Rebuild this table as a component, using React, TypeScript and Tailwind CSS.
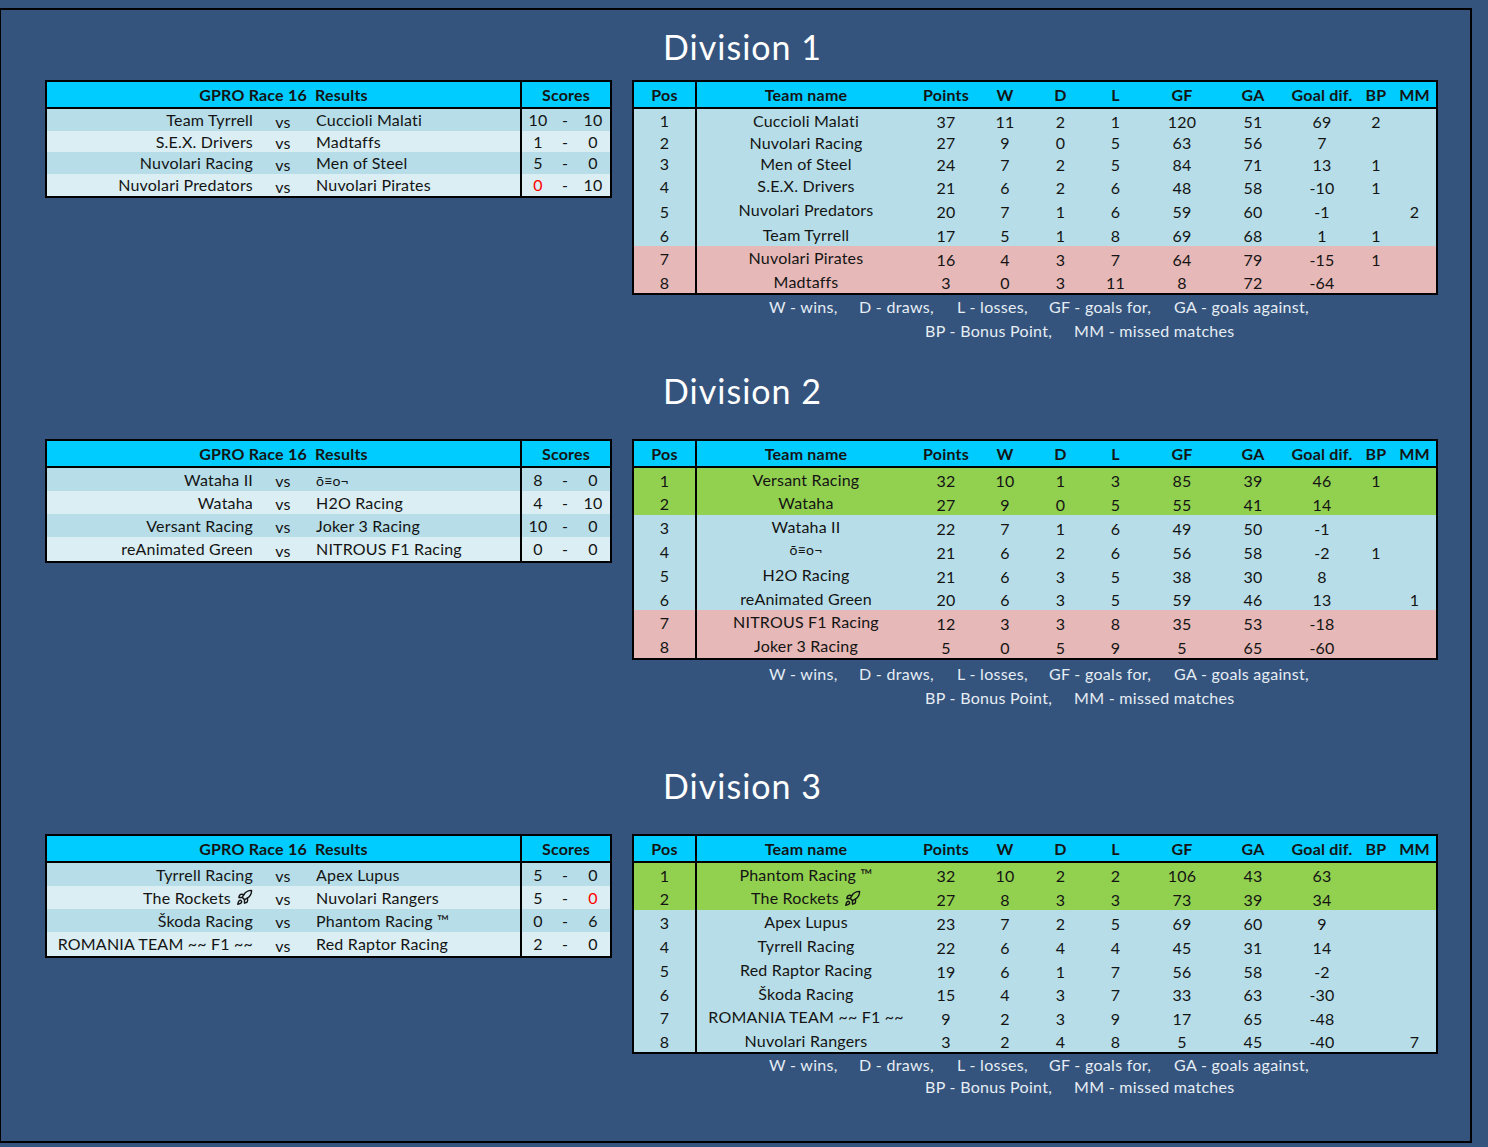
import React from 'react';
import { Rocket } from 'lucide-react';

type Match = { home: string; away: string; hs: string; as: string; redHome?: boolean; redAway?: boolean };
type Standing = { pos: number; team: string; pts: string; w: string; d: string; l: string; gf: string; ga: string; dif: string; bp?: string; mm?: string; tone: 'blue' | 'pink' | 'green' };

const toneBg = {
  blue: 'bg-[#b7dee8]',
  pink: 'bg-[#e6b8b7]',
  green: 'bg-[#92d050]',
};

const divisions = [
  {
    title: 'Division 1',
    titleMt: 'mt-0',
    titleBox: 'h-[70px] pt-[4px] leading-[66px]',
    tableMt: 'mt-0',
    resultRows: [22, 21, 22, 22],
    standRows: [22, 21, 22, 24, 25, 23, 24, 23],
    legend: 'mt-0 leading-[24px]',
    matches: [
      { home: 'Team Tyrrell', away: 'Cuccioli Malati', hs: '10', as: '10' },
      { home: 'S.E.X. Drivers', away: 'Madtaffs', hs: '1', as: '0' },
      { home: 'Nuvolari Racing', away: 'Men of Steel', hs: '5', as: '0' },
      { home: 'Nuvolari Predators', away: 'Nuvolari Pirates', hs: '0', as: '10', redHome: true },
    ] as Match[],
    table: [
      { pos: 1, team: 'Cuccioli Malati', pts: '37', w: '11', d: '2', l: '1', gf: '120', ga: '51', dif: '69', bp: '2', tone: 'blue' },
      { pos: 2, team: 'Nuvolari Racing', pts: '27', w: '9', d: '0', l: '5', gf: '63', ga: '56', dif: '7', tone: 'blue' },
      { pos: 3, team: 'Men of Steel', pts: '24', w: '7', d: '2', l: '5', gf: '84', ga: '71', dif: '13', bp: '1', tone: 'blue' },
      { pos: 4, team: 'S.E.X. Drivers', pts: '21', w: '6', d: '2', l: '6', gf: '48', ga: '58', dif: '-10', bp: '1', tone: 'blue' },
      { pos: 5, team: 'Nuvolari Predators', pts: '20', w: '7', d: '1', l: '6', gf: '59', ga: '60', dif: '-1', mm: '2', tone: 'blue' },
      { pos: 6, team: 'Team Tyrrell', pts: '17', w: '5', d: '1', l: '8', gf: '69', ga: '68', dif: '1', bp: '1', tone: 'blue' },
      { pos: 7, team: 'Nuvolari Pirates', pts: '16', w: '4', d: '3', l: '7', gf: '64', ga: '79', dif: '-15', bp: '1', tone: 'pink' },
      { pos: 8, team: 'Madtaffs', pts: '3', w: '0', d: '3', l: '11', gf: '8', ga: '72', dif: '-64', tone: 'pink' },
    ] as Standing[],
  },
  {
    title: 'Division 2',
    titleMt: 'mt-[15px]',
    titleBox: 'h-[66px] leading-[66px]',
    tableMt: 'mt-[15px]',
    resultRows: [23, 23, 23, 24],
    standRows: [23, 24, 24, 24, 24, 23, 24, 24],
    legend: 'mt-[2px] leading-[24px]',
    matches: [
      { home: 'Wataha II', away: 'ō≡o¬', hs: '8', as: '0' },
      { home: 'Wataha', away: 'H2O Racing', hs: '4', as: '10' },
      { home: 'Versant Racing', away: 'Joker 3 Racing', hs: '10', as: '0' },
      { home: 'reAnimated Green', away: 'NITROUS F1 Racing', hs: '0', as: '0' },
    ] as Match[],
    table: [
      { pos: 1, team: 'Versant Racing', pts: '32', w: '10', d: '1', l: '3', gf: '85', ga: '39', dif: '46', bp: '1', tone: 'green' },
      { pos: 2, team: 'Wataha', pts: '27', w: '9', d: '0', l: '5', gf: '55', ga: '41', dif: '14', tone: 'green' },
      { pos: 3, team: 'Wataha II', pts: '22', w: '7', d: '1', l: '6', gf: '49', ga: '50', dif: '-1', tone: 'blue' },
      { pos: 4, team: 'ō≡o¬', pts: '21', w: '6', d: '2', l: '6', gf: '56', ga: '58', dif: '-2', bp: '1', tone: 'blue' },
      { pos: 5, team: 'H2O Racing', pts: '21', w: '6', d: '3', l: '5', gf: '38', ga: '30', dif: '8', tone: 'blue' },
      { pos: 6, team: 'reAnimated Green', pts: '20', w: '6', d: '3', l: '5', gf: '59', ga: '46', dif: '13', mm: '1', tone: 'blue' },
      { pos: 7, team: 'NITROUS F1 Racing', pts: '12', w: '3', d: '3', l: '8', gf: '35', ga: '53', dif: '-18', tone: 'pink' },
      { pos: 8, team: 'Joker 3 Racing', pts: '5', w: '0', d: '5', l: '9', gf: '5', ga: '65', dif: '-60', tone: 'pink' },
    ] as Standing[],
  },
  {
    title: 'Division 3',
    titleMt: 'mt-[43px]',
    titleBox: 'h-[66px] leading-[66px]',
    tableMt: 'mt-[15px]',
    resultRows: [23, 23, 23, 24],
    standRows: [23, 24, 24, 24, 24, 23, 24, 23],
    legend: 'mt-0 leading-[22px]',
    matches: [
      { home: 'Tyrrell Racing', away: 'Apex Lupus', hs: '5', as: '0' },
      { home: 'The Rockets', away: 'Nuvolari Rangers', hs: '5', as: '0', redAway: true },
      { home: 'Škoda Racing', away: 'Phantom Racing ™', hs: '0', as: '6' },
      { home: 'ROMANIA TEAM ~~ F1 ~~', away: 'Red Raptor Racing', hs: '2', as: '0' },
    ] as Match[],
    table: [
      { pos: 1, team: 'Phantom Racing ™', pts: '32', w: '10', d: '2', l: '2', gf: '106', ga: '43', dif: '63', tone: 'green' },
      { pos: 2, team: 'The Rockets', pts: '27', w: '8', d: '3', l: '3', gf: '73', ga: '39', dif: '34', tone: 'green' },
      { pos: 3, team: 'Apex Lupus', pts: '23', w: '7', d: '2', l: '5', gf: '69', ga: '60', dif: '9', tone: 'blue' },
      { pos: 4, team: 'Tyrrell Racing', pts: '22', w: '6', d: '4', l: '4', gf: '45', ga: '31', dif: '14', tone: 'blue' },
      { pos: 5, team: 'Red Raptor Racing', pts: '19', w: '6', d: '1', l: '7', gf: '56', ga: '58', dif: '-2', tone: 'blue' },
      { pos: 6, team: 'Škoda Racing', pts: '15', w: '4', d: '3', l: '7', gf: '33', ga: '63', dif: '-30', tone: 'blue' },
      { pos: 7, team: 'ROMANIA TEAM ~~ F1 ~~', pts: '9', w: '2', d: '3', l: '9', gf: '17', ga: '65', dif: '-48', tone: 'blue' },
      { pos: 8, team: 'Nuvolari Rangers', pts: '3', w: '2', d: '4', l: '8', gf: '5', ga: '45', dif: '-40', mm: '7', tone: 'blue' },
    ] as Standing[],
  },
];

// column widths of the standings table, after the Pos column
const cols = [
  { key: 'team', label: 'Team name', w: 'w-[218px]' },
  { key: 'pts', label: 'Points', w: 'w-[62px]' },
  { key: 'w', label: 'W', w: 'w-[56px]' },
  { key: 'd', label: 'D', w: 'w-[55px]' },
  { key: 'l', label: 'L', w: 'w-[55px]' },
  { key: 'gf', label: 'GF', w: 'w-[78px]' },
  { key: 'ga', label: 'GA', w: 'w-[64px]' },
  { key: 'dif', label: 'Goal dif.', w: 'w-[74px]' },
  { key: 'bp', label: 'BP', w: 'w-[34px]' },
  { key: 'mm', label: 'MM', w: 'w-[43px]' },
] as const;

const TeamName: React.FC<{ name: string }> = ({ name }) => {
  if (name === 'ō≡o¬') return <span className="text-[14px]">{name}</span>;
  if (name === 'The Rockets')
    return (
      <span className="inline-flex items-center gap-[5px]">
        {name}
        <Rocket className="w-[17px] h-[17px]" strokeWidth={2} />
      </span>
    );
  return <>{name}</>;
};

const ResultsTable: React.FC<{ matches: Match[]; rows: number[] }> = ({ matches, rows }) => (
  <div className="ml-[44px] w-[567px] border-2 border-black">
    <div className="flex h-[27px] bg-[#00ccff] border-b-2 border-black font-bold text-[16px]">
      <div className="w-[473px] flex items-end justify-center whitespace-pre">GPRO Race 16  Results</div>
      <div className="flex-1 border-l-2 border-black flex items-end justify-center">Scores</div>
    </div>
    {matches.map((m, i) => (
      <div
        key={i}
        className={`flex items-center ${i % 2 === 0 ? 'bg-[#b7dee8]' : 'bg-[#daeef3]'}`}
        style={{ height: rows[i] }}
      >
        <div className="w-[206px] text-right whitespace-nowrap">
          <TeamName name={m.home} />
        </div>
        <div className="w-[60px] text-center pt-[3px]">vs</div>
        <div className="w-[207px] pl-[3px] whitespace-nowrap">
          <TeamName name={m.away} />
        </div>
        <div className="flex-1 h-full flex items-center border-l-2 border-black">
          <span className={`w-[32px] text-center ${m.redHome ? 'text-[#ff0000]' : ''}`}>{m.hs}</span>
          <span className="w-[22px] text-center">-</span>
          <span className={`w-[34px] text-center ${m.redAway ? 'text-[#ff0000]' : ''}`}>{m.as}</span>
        </div>
      </div>
    ))}
  </div>
);

const StandingsTable: React.FC<{ table: Standing[]; rows: number[] }> = ({ table, rows }) => (
  <div className="w-[806px] border-2 border-black">
    <div className="flex h-[27px] bg-[#00ccff] border-b-2 border-black font-bold text-[16px]">
      <div className="w-[63px] border-r-2 border-black flex items-end justify-center">Pos</div>
      {cols.map((c) => (
        <div key={c.key} className={`${c.w} flex items-end justify-center whitespace-nowrap`}>
          {c.label}
        </div>
      ))}
    </div>
    {table.map((r, i) => (
      <div key={r.pos} className={`flex ${toneBg[r.tone]}`} style={{ height: rows[i] }}>
        <div className="w-[63px] border-r-2 border-black flex items-center justify-center pt-[2px]">{r.pos}</div>
        {cols.map((c) => (
          <div
            key={c.key}
            className={`${c.w} flex justify-center whitespace-nowrap ${c.key === 'team' ? 'items-start' : 'items-center pt-[3px]'}`}
          >
            {c.key === 'team' ? <TeamName name={r.team} /> : (r as any)[c.key] ?? ''}
          </div>
        ))}
      </div>
    ))}
  </div>
);

const Legend: React.FC<{ cls: string }> = ({ cls }) => (
  <div className={`text-[16px] tracking-[0.3px] text-[#e6edf4] whitespace-nowrap ${cls}`}>
    <div className="flex pl-[137px]">
      <span className="w-[90px]">W - wins,</span>
      <span className="w-[98px]">D - draws,</span>
      <span className="w-[92px]">L - losses,</span>
      <span className="w-[125px]">GF - goals for,</span>
      <span>GA - goals against,</span>
    </div>
    <div className="flex pl-[293px]">
      <span className="w-[149px]">BP - Bonus Point,</span>
      <span>MM - missed matches</span>
    </div>
  </div>
);

const App: React.FC = () => {
  return (
    <div className="w-[1488px] h-[1147px] bg-[#34547d] pt-[8px] font-['Lato',sans-serif] text-[16px] tracking-[0.2px] text-[#141414] overflow-hidden">
      <div className="w-[1472px] h-[1135px] border-2 border-l border-black">
        {divisions.map((div) => (
          <section key={div.title}>
            {/* Division title */}
            <div className={`${div.titleMt} ${div.titleBox} text-center pl-[14px] text-white text-[34px] tracking-[1px]`}>
              {div.title}
            </div>

            {/* Results + standings */}
            <div className={`flex items-start ${div.tableMt}`}>
              <ResultsTable matches={div.matches} rows={div.resultRows} />
              <div className="ml-[20px]">
                <StandingsTable table={div.table} rows={div.standRows} />
                <Legend cls={div.legend} />
              </div>
            </div>
          </section>
        ))}
      </div>
    </div>
  );
};

export default App;
